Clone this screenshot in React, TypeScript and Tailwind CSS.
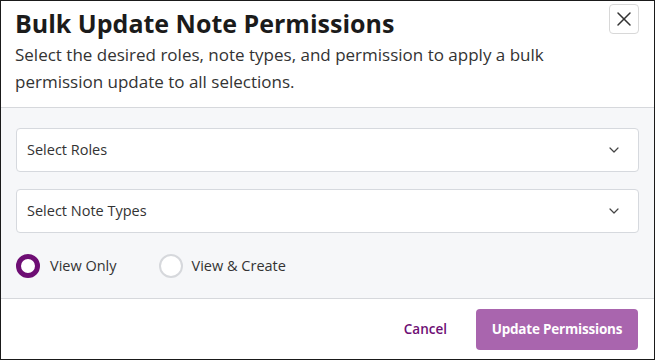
import { X, ChevronDown } from 'lucide-react'

export default function App() {
  return (
    <div className="w-[655px] h-[360px] bg-white border border-[#1a1a1a] flex flex-col" style={{ fontFamily: '"Open Sans", "Noto Sans", sans-serif' }}>
      {/* Header */}
      <div className="h-[107px] border-b border-[#d6d8dc] pl-[14px] pr-4 pt-[4px] flex flex-col">
        <div className="flex items-start justify-between">
          <h1 className="text-[25px] leading-[36px] font-bold text-[#1b1b1b]">Bulk Update Note Permissions</h1>
          <button className="w-[30px] h-[30px] -mt-[1px] -mr-[1px] rounded-[4px] border border-[#d8d8d8] flex items-center justify-center text-[#333]">
            <X size={24} strokeWidth={1.5} />
          </button>
        </div>
        <p className="text-[17px] leading-[27px] text-[#333] mt-[0px] pr-[90px]">
          Select the desired roles, note types, and permission to apply a bulk permission update to all selections.
        </p>
      </div>

      {/* Body */}
      <div className="h-[190px] bg-[#f6f7f9] px-[15px] pt-[20px] flex flex-col">
        <div className="h-[44px] bg-white border border-[#d6d9de] rounded-[4px] flex items-center justify-between pl-[10px] pr-[16px]">
          <span className="text-[14.5px] text-[#333]">Select Roles</span>
          <ChevronDown size={16} strokeWidth={1.8} className="text-[#444]" />
        </div>
        <div className="h-[44px] mt-[17px] bg-white border border-[#d6d9de] rounded-[4px] flex items-center justify-between pl-[10px] pr-[16px]">
          <span className="text-[14.5px] text-[#333]">Select Note Types</span>
          <ChevronDown size={16} strokeWidth={1.8} className="text-[#444]" />
        </div>
        <div className="flex items-center mt-[21px]">
          <label className="flex items-center gap-[10px]">
            <span className="w-[24px] h-[24px] rounded-full border-[5px] border-[#6e0e74] bg-white" />
            <span className="text-[14.5px] text-[#333]">View Only</span>
          </label>
          <label className="flex items-center gap-[9px] ml-[42px]">
            <span className="w-[24px] h-[24px] rounded-full border-2 border-[#d6d8dc] bg-white" />
            <span className="text-[14.5px] text-[#333]">View &amp; Create</span>
          </label>
        </div>
      </div>

      {/* Footer */}
      <div className="flex-1 border-t border-[#d6d8dc] flex items-center justify-end pr-[16px] gap-[29px]">
        <button className="text-[13.5px] font-semibold text-[#6e0e74]">Cancel</button>
        <button className="w-[162px] h-[41px] rounded-[4px] bg-[#a965ae] text-white text-[13.5px] font-bold tracking-[-0.2px]">Update Permissions</button>
      </div>
    </div>
  )
}
